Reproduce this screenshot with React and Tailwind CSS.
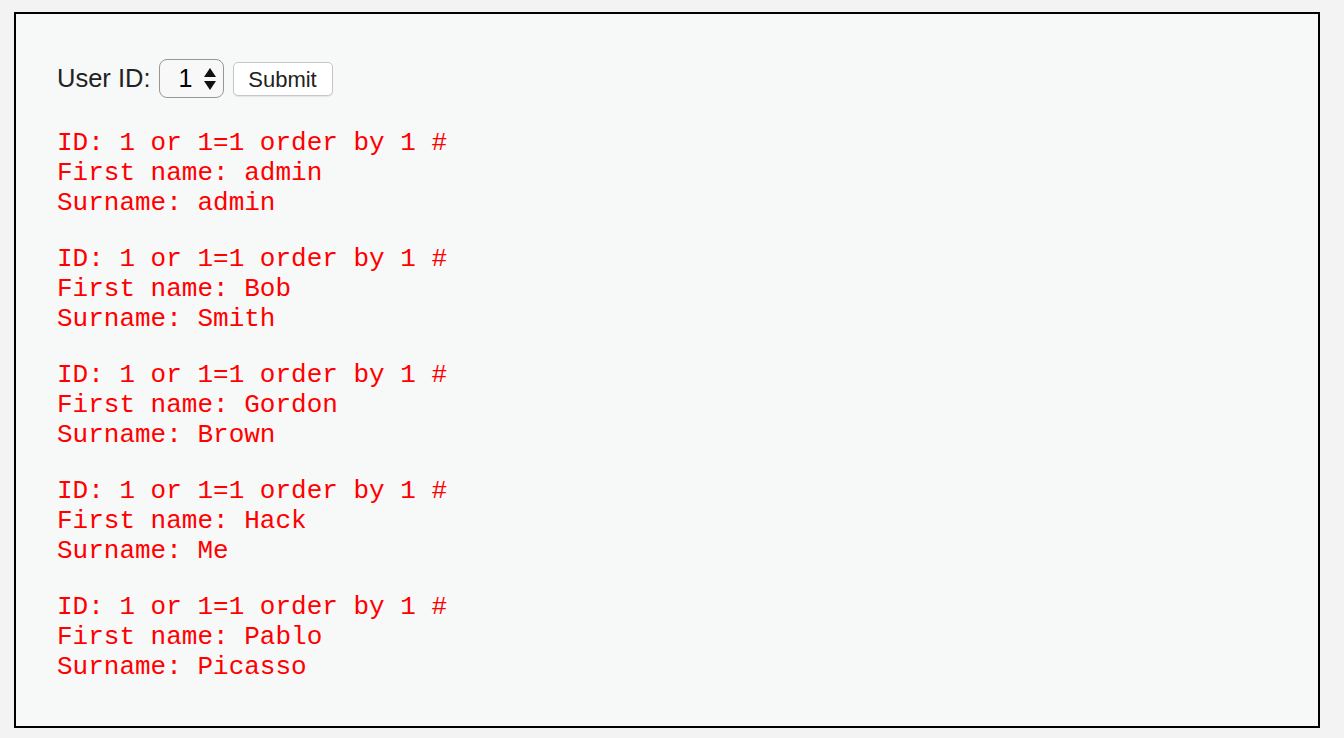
import React from 'react'

const rows = [
    ['admin', 'admin'],
    ['Bob', 'Smith'],
    ['Gordon', 'Brown'],
    ['Hack', 'Me'],
    ['Pablo', 'Picasso'],
]

export default function App() {
    return (
        <div className="w-[1344px] h-[738px] bg-[#f3f3f3] pt-[12px] pl-[14px]">
            <div className="w-[1306px] h-[716px] border-2 border-black bg-[#f7f8f8] pl-[41px] pt-[45px]">
                <form className="flex items-center h-[39px] font-['Liberation_Sans',Arial,sans-serif] text-[#222]">
                    <span className="text-[25.5px] mr-[8px]">User ID:</span>
                    <div className="flex items-center justify-end w-[65px] h-[39px] rounded-[8px] border-[1.5px] border-[#979797] bg-[#f8f8f8] pr-[6px] gap-[10px]">
                        <span className="text-[25px] text-black leading-none">1</span>
                        <svg width="14" height="26" viewBox="0 0 14 26">
                            <path d="M7 2 L13 11 L1 11 Z" fill="#111" />
                            <path d="M1 15 L13 15 L7 24 Z" fill="#111" />
                        </svg>
                    </div>
                    <button type="button" className="ml-[9px] w-[100px] h-[34px] rounded-[5px] border border-[#c6c6c6] bg-white text-[22px] text-[#222] shadow-[0_1px_1px_rgba(0,0,0,0.08)]">
                        Submit
                    </button>
                </form>
                <div className="mt-[30px] text-[26px] leading-[30px] text-[#ff0000]">
                    {rows.map(([first, last], i) => (
                        <pre key={i} className={`font-['Liberation_Mono','Courier_New',monospace] ${i > 0 ? 'mt-[26px]' : ''}`}>
                            {`ID: 1 or 1=1 order by 1 #\nFirst name: ${first}\nSurname: ${last}`}
                        </pre>
                    ))}
                </div>
            </div>
        </div>
    )
}
